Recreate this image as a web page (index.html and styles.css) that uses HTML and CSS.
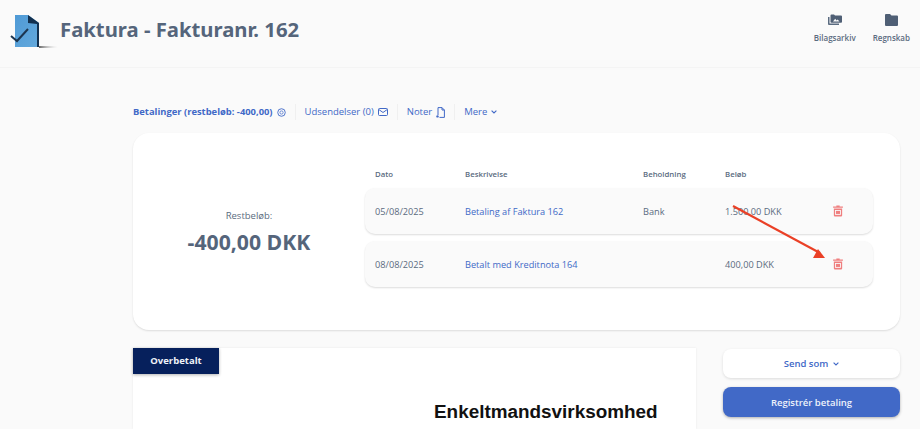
FILE: index.html
```html
<!DOCTYPE html>
<html lang="da">
<head>
    <meta charset="UTF-8">
    <meta name="viewport" content="width=device-width, initial-scale=1.0">
    <title>Faktura - Fakturanr. 162</title>
    <link rel="stylesheet" href="styles.css">
</head>
<body>
    <header class="topbar">
        <div class="brand">
            <svg class="logo" width="48" height="36" viewBox="0 0 48 36">
                <defs>
                    <linearGradient id="sheet" x1="0" y1="0" x2="1" y2="1">
                        <stop offset="0" stop-color="#4f9ad6"/>
                        <stop offset="1" stop-color="#64a9dc"/>
                    </linearGradient>
                    <linearGradient id="floor" x1="0" y1="0" x2="1" y2="0">
                        <stop offset="0" stop-color="#666"/>
                        <stop offset="1" stop-color="#ddd"/>
                    </linearGradient>
                </defs>
                <path d="M39 31 L58 32 L39 33 Z" fill="url(#floor)"/>
                <path d="M15 0 L28 0 L39 8 L39 32 L15 32 Z" fill="url(#sheet)"/>
                <path d="M28 0 L39 8 L39 32 L37 32 L37 9 L28 8 Z" fill="#12304f"/>
                <path d="M11 21 L17 26 L28 14" fill="none" stroke="#1c3550" stroke-width="2"/>
            </svg>
            <h1>Faktura - Fakturanr. 162</h1>
        </div>
        <div class="shortcuts">
            <a class="shortcut" href="#">
                <svg width="14" height="12" viewBox="0 0 14 12">
                    <path d="M0 3 H1.5 V9.5 H11 V11 H1 Q0 11 0 10 Z" fill="#5a6b80"/>
                    <path d="M2.5 1.5 Q2.5 .5 3.5 .5 H6 L7 1.5 H13 Q14 1.5 14 2.5 V8 Q14 8.8 13 8.8 H3.5 Q2.5 8.8 2.5 8 Z" fill="#4f5f75"/>
                    <path d="M5 7.5 L7.2 4.8 L8.6 6.4 L9.6 5.4 L11.5 7.5 Z" fill="#fafafa"/>
                </svg>
                <span>Bilagsarkiv</span>
            </a>
            <a class="shortcut" href="#">
                <svg width="13" height="12" viewBox="0 0 13 12">
                    <path d="M0 1 Q0 0 1 0 H5 L6.5 1.6 H12 Q13 1.6 13 2.6 V11 Q13 12 12 12 H1 Q0 12 0 11 Z" fill="#4f5f75"/>
                </svg>
                <span>Regnskab</span>
            </a>
        </div>
    </header>

    <main class="content">
        <nav class="tabs">
            <a class="tab tab-active" href="#">Betalinger (restbeløb: -400,00)
                <svg width="9" height="9" viewBox="0 0 10 10"><circle cx="5" cy="5" r="4.2" fill="none" stroke="#4169c7"/><circle cx="5" cy="5" r="1.8" fill="none" stroke="#4169c7" stroke-width=".8"/></svg>
            </a>
            <a class="tab" href="#">Udsendelser (0)
                <svg width="10" height="8" viewBox="0 0 10 8"><rect x=".5" y=".5" width="9" height="7" rx="1" fill="none" stroke="#4169c7"/><path d="M.8 1.5 L5 4.5 L9.2 1.5" fill="none" stroke="#4169c7"/></svg>
            </a>
            <a class="tab" href="#">Noter
                <svg width="9" height="11" viewBox="0 0 9 11"><path d="M2 8 V.6 H6 L8.4 3 V10.4 H3.5 M6 .6 V3 H8.4" fill="none" stroke="#4169c7"/><circle cx="1.5" cy="9.4" r="1.2" fill="#4169c7"/></svg>
            </a>
            <a class="tab" href="#">Mere
                <svg class="chevron" width="6" height="4" viewBox="0 0 6 4"><path d="M.6 .6 L3 3 L5.4 .6" fill="none" stroke="#4169c7" stroke-width="1.100"/></svg>
            </a>
        </nav>

        <section class="card">
            <div class="balance">
                <div class="balance-label">Restbeløb:</div>
                <div class="balance-value">-400,00 DKK</div>
            </div>
            <div class="payments">
                <div class="row-grid heading">
                    <span>Dato</span>
                    <span>Beskrivelse</span>
                    <span>Beholdning</span>
                    <span>Beløb</span>
                </div>
                <div class="row-grid payment">
                    <span>05/08/2025</span>
                    <a href="#">Betaling af Faktura 162</a>
                    <span>Bank</span>
                    <span>1.500,00 DKK</span>
                    <svg class="trash" width="10" height="12" viewBox="0 0 9 11"><path d="M3 .5 H6 V1.4 H9 V2.6 H0 V1.4 H3 Z M.7 3.2 H8.3 V9.6 Q8.3 10.6 7.3 10.6 H1.7 Q.7 10.6 .7 9.6 Z" fill="#ef7f7f"/><rect x="2.2" y="5" width="4.6" height="3.6" fill="none" stroke="#fafafa" stroke-width=".8"/></svg>
                </div>
                <div class="row-grid payment">
                    <span>08/08/2025</span>
                    <a href="#">Betalt med Kreditnota 164</a>
                    <span></span>
                    <span>400,00 DKK</span>
                    <svg class="trash" width="10" height="12" viewBox="0 0 9 11"><path d="M3 .5 H6 V1.4 H9 V2.6 H0 V1.4 H3 Z M.7 3.2 H8.3 V9.6 Q8.3 10.6 7.3 10.6 H1.7 Q.7 10.6 .7 9.6 Z" fill="#ef7f7f"/><rect x="2.2" y="5" width="4.6" height="3.6" fill="none" stroke="#fafafa" stroke-width=".8"/></svg>
                </div>
            </div>
        </section>

        <div class="lower">
            <section class="document">
                <div class="ribbon">Overbetalt</div>
                <div class="company">Enkeltmandsvirksomhed</div>
            </section>
            <aside class="actions">
                <a class="btn btn-light" href="#">Send som
                    <svg class="chevron" width="6" height="4" viewBox="0 0 6 4"><path d="M.6 .6 L3 3 L5.4 .6" fill="none" stroke="#4169c7" stroke-width="1.100"/></svg>
                </a>
                <a class="btn btn-primary" href="#">Registrér betaling</a>
            </aside>
        </div>
    </main>

    <!-- pil tegnet oven paa screenshottet -->
    <svg class="annotation" width="920" height="429" viewBox="0 0 920 429">
        <path d="M733 206 L820 253" stroke="#ea4026" stroke-width="2.2" fill="none"/>
        <path d="M825 258 L813 258 L818 249 Z" fill="#ea4026"/>
    </svg>
</body>
</html>
```

FILE: styles.css
```css
html, body {
    height: 429px;
    overflow: hidden;
}
body {
    font-family: "Open Sans", Arial, sans-serif;
    margin: 0;
    padding: 0;
    background: #fafafa;
    color: #5a6b80;
    position: relative;
}
a {
    text-decoration: none;
    color: #4169c7;
}
.topbar {
    height: 68px;
    box-sizing: border-box;
    border-bottom: 1px solid #f4f4f4;
    display: flex;
    justify-content: space-between;
}
.brand {
    display: flex;
    align-items: flex-start;
}
.logo {
    margin-top: 15px;
    overflow: visible;
}
.brand h1 {
    margin: 14px 0 0 12px;
    font-size: 20.300px;
    line-height: 30px;
    font-weight: 700;
    color: #55657b;
    font-family: "Noto Sans", "Open Sans", sans-serif;
}
.shortcuts {
    display: flex;
    gap: 17px;
    padding: 14px 10px 0 0;
}
.shortcut {
    display: flex;
    flex-direction: column;
    align-items: center;
    gap: 6px;
    font-size: 8px;
    line-height: 11px;
    font-weight: 600;
    color: #5a6b80;
}
.content {
    padding: 36px 20px 0 133px;
}
.tabs {
    display: flex;
    align-items: center;
    height: 16px;
    margin-bottom: 13px;
}
.tab {
    font-size: 9.500px;
    line-height: 16px;
    padding-right: 9px;
    margin-right: 9px;
    border-right: 1px solid #f0f0f0;
    display: flex;
    align-items: center;
    gap: 4px;
}
.tab:last-child {
    border-right: none;
}
.tab-active {
    font-size: 9.400px;
    font-weight: 700;
}
.card {
    height: 197px;
    box-sizing: border-box;
    background: white;
    border-radius: 16px;
    box-shadow: 0 1px 2px rgba(0, 0, 0, 0.12);
    display: flex;
    margin-bottom: 18px;
}
.balance {
    width: 232px;
    text-align: center;
    padding-top: 76px;
}
.balance-label {
    font-size: 9.500px;
    line-height: 13px;
}
.balance-value {
    font-size: 21.200px;
    line-height: 27px;
    font-weight: 700;
    margin-top: 6px;
    color: #55657b;
}
.payments {
    width: 508px;
    padding-top: 33px;
}
.row-grid {
    display: grid;
    grid-template-columns: 90px 178px 82px 108px 1fr;
    padding-left: 10px;
    align-items: center;
}
.heading {
    font-size: 7.800px;
    line-height: 16px;
    font-weight: 600;
    margin-bottom: 6px;
}
.payment {
    height: 46px;
    background: #fafafa;
    border-radius: 10px;
    box-shadow: 0 1px 2px rgba(0, 0, 0, 0.14);
    font-size: 9.200px;
    margin-bottom: 7px;
}
.lower {
    display: flex;
    justify-content: space-between;
}
.document {
    width: 563px;
    height: 81px;
    background: white;
    box-shadow: 0 0 2px rgba(0, 0, 0, 0.08);
}
.ribbon {
    width: 86px;
    height: 26px;
    background: #06205c;
    color: #f0f2f8;
    font-size: 9.500px;
    font-weight: 700;
    line-height: 26px;
    text-align: center;
    box-shadow: 0 1px 3px rgba(0, 0, 0, 0.3);
}
.company {
    font-family: "Liberation Sans", Arial, sans-serif;
    font-weight: 700;
    font-size: 18.900px;
    line-height: 22px;
    color: #111;
    margin: 27px 0 0 301px;
}
.actions {
    width: 177px;
    margin-top: 1px;
    display: flex;
    flex-direction: column;
    gap: 9px;
}
.btn {
    height: 29px;
    border-radius: 8px;
    display: flex;
    align-items: center;
    justify-content: center;
    gap: 5px;
    font-size: 9.500px;
    font-weight: 600;
}
.btn-light {
    background: white;
    box-shadow: 0 1px 3px rgba(0, 0, 0, 0.12);
}
.btn-primary {
    height: 30px;
    background: #4169c7;
    color: #eef2fb;
    box-shadow: 0 1px 3px rgba(0, 0, 0, 0.3);
}
.annotation {
    position: absolute;
    top: 0;
    left: 0;
    pointer-events: none;
}
```
